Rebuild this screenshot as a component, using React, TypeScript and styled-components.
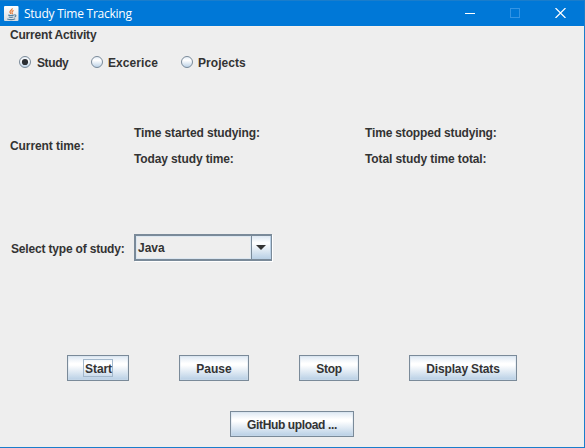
import React, { useState } from "react";
import styled, { createGlobalStyle } from "styled-components";

const GlobalStyle = createGlobalStyle`
  * { box-sizing: border-box; }
  body { margin: 0; background: #eeeeee; overflow: hidden; }
`;

const Window = styled.div`
  display: flex;
  flex-direction: column;
  width: 585px;
  height: 448px;
  background: #eeeeee;
  border-right: 1px solid #1a7dcb;
  border-bottom: 1px solid #1a7dcb;
  font: bold 12px/16px "Liberation Sans", Arial, sans-serif;
  color: #333333;
`;

const TitleBar = styled.header`
  display: flex;
  align-items: center;
  flex: none;
  height: 26px;
  padding-left: 4px;
  background: #0078d7;
  border-top: 1px solid #1a7dcb;
  color: #ffffff;
`;

const Title = styled.h1<{ $spacing: number }>`
  flex: 1;
  margin: 0 0 0 5px;
  font: 400 12px/16px "Open Sans", "Noto Sans", sans-serif;
  letter-spacing: ${(p) => p.$spacing}px;
  white-space: nowrap;
`;

const Controls = styled.div`
  display: flex;
  gap: 35px;
  margin: -1px 18px 0 0;
`;

const Content = styled.main`
  display: flex;
  flex-direction: column;
  flex: 1;
  border-top: 1px solid #f6f1ec;
`;

const Label = styled.span<{ $spacing?: number }>`
  display: block;
  height: 16px;
  white-space: nowrap;
  letter-spacing: ${(p) => p.$spacing ?? 0}px;
`;

const Heading = styled.div`
  padding-left: 10px;
`;

const RadioRow = styled.div`
  display: flex;
  height: 16px;
  margin-top: 12px;
  padding-left: 19px;
`;

const RadioOption = styled.div<{ $width: number; $gap: number }>`
  display: flex;
  align-items: flex-start;
  gap: ${(p) => p.$gap}px;
  width: ${(p) => p.$width}px;
`;

const TimesPanel = styled.section`
  display: grid;
  grid-template-columns: 124px 231px 1fr;
  align-items: center;
  height: 42px;
  margin-top: 54px;
  padding-left: 10px;
`;

const TimeColumn = styled.div`
  display: flex;
  flex-direction: column;
  gap: 10px;
`;

const SelectRow = styled.section`
  display: flex;
  align-items: flex-start;
  height: 28px;
  margin-top: 67px;
  padding-left: 11px;
`;

const SelectLabel = styled.div`
  width: 123px;
  padding-top: 7px;
`;

const ComboBox = styled.div`
  display: flex;
  width: 138px;
  height: 27px;
  border: 2px solid #7a8a99;
  border-right-width: 1px;
  box-shadow: 1px 1px 0 #ffffff;
`;

const ComboValue = styled.div`
  flex: 1;
  padding: 3px 0 0 1px;
  border: 1px solid #dce7f1;
`;

const ComboArrow = styled.div`
  display: flex;
  align-items: center;
  justify-content: center;
  width: 20px;
  border-left: 1px solid #7a8a99;
  border-right: 1px solid #b8cfe5;
  background: linear-gradient(#dde8f3 0%, #ffffff 30%, #b8cfe5 100%);
`;

const ButtonRow = styled.section`
  display: flex;
  height: 26px;
  margin-top: 93px;
  padding-left: 67px;
`;

const Button = styled.button<{ $width: number; $gap?: number }>`
  display: flex;
  align-items: center;
  justify-content: center;
  flex: none;
  width: ${(p) => p.$width}px;
  height: 26px;
  margin: 0 ${(p) => p.$gap ?? 0}px 0 0;
  padding: 1px 0 0;
  border: 1px solid #7a8a99;
  border-radius: 0;
  outline: none;
  background: linear-gradient(#dde8f3 0%, #ffffff 30%, #ffffff 38%, #b8cfe5 100%);
  box-shadow: inset 0 0 0 1px #d3dfea66;
  font: inherit;
  color: inherit;
`;

const FocusRing = styled.span`
  display: flex;
  justify-content: center;
  width: 30px;
  height: 18px;
  margin-top: -2px;
  padding: 1px 0 0 1px;
  border: 1px solid #a3b8cc;
`;

const UploadRow = styled.section`
  display: flex;
  height: 26px;
  margin-top: 30px;
  padding-left: 230px;
`;

const JavaIcon = () => (
  <svg width="15" height="16" viewBox="0 0 15 16">
    <defs>
      <linearGradient id="tile" x1="0" y1="0" x2="0" y2="1">
        <stop offset="0" stopColor="#ffffff" />
        <stop offset="1" stopColor="#d8dce0" />
      </linearGradient>
    </defs>
    <rect x="0" y="0" width="14.5" height="15" rx="1" fill="url(#tile)" />
    <path d="M8.2 2.2c.6 1.5-2.6 2.4-2.3 3.9.1.7 1 1.3 1.1 1.9M9.6 4.6C8 5.200 7.600 6 8.200 6.800c.4.5.2.9-.2 1.300" fill="none" stroke="#e5752e" strokeWidth="1.1" />
    <path d="M4.200 9.100c1.200.5 4.200.4 5.600 0M4.800 11c1.300.5 3.400.4 4.500 0M3.200 12.900c2.300.8 6.100.7 8-.2M10.200 9c2.200-.5 2.300 1.500.2 2.200" fill="none" stroke="#527f9e" strokeWidth="1.1" />
  </svg>
);

const MinimizeIcon = () => (
  <svg width="10" height="10" viewBox="0 0 10 10">
    <path d="M0 5.500h10" stroke="#ffffff" />
  </svg>
);

const MaximizeIcon = () => (
  <svg width="10" height="10" viewBox="0 0 10 10">
    <rect x=".5" y=".5" width="9" height="9" fill="none" stroke="#3394e4" />
  </svg>
);

const CloseIcon = () => (
  <svg width="11" height="10" viewBox="0 0 11 10">
    <path d="M.5 0l10 10M10.500 0L.5 10" stroke="#ffffff" strokeWidth="1.2" />
  </svg>
);

const RadioIcon = ({ checked }: { checked: boolean }) => (
  <svg width="12" height="13" viewBox="0 0 12 13">
    <defs>
      <linearGradient id="radio" x1="0" y1="0" x2="0" y2="1">
        <stop offset="0" stopColor="#e3ecf5" />
        <stop offset=".35" stopColor="#ffffff" />
        <stop offset="1" stopColor="#b8cfe5" />
      </linearGradient>
    </defs>
    <circle cx="6" cy="7" r="5.500" fill="url(#radio)" stroke="#7a8a99" />
    {checked && <circle cx="6" cy="7" r="3.100" fill="#2b2e33" />}
  </svg>
);

const activities = [
  { name: "Study", width: 72, gap: 6, spacing: -0.4 },
  { name: "Excerice", width: 90, gap: 5, spacing: 0.08 },
  { name: "Projects", width: 80, gap: 5, spacing: 0.06 },
];

export default function App() {
  const [activity, setActivity] = useState("Study");
  return (
    <>
      <GlobalStyle />
      <Window>
        <TitleBar>
          <JavaIcon />
          <Title $spacing={-0.25}>Study Time Tracking</Title>
          <Controls>
            <MinimizeIcon />
            <MaximizeIcon />
            <CloseIcon />
          </Controls>
        </TitleBar>
        <Content>
          <Heading>
            <Label $spacing={-0.2}>Current Activity</Label>
          </Heading>
          <RadioRow>
            {activities.map((a) => (
              <RadioOption key={a.name} $width={a.width} $gap={a.gap} onClick={() => setActivity(a.name)}>
                <RadioIcon checked={activity === a.name} />
                <Label $spacing={a.spacing}>{a.name}</Label>
              </RadioOption>
            ))}
          </RadioRow>
          <TimesPanel>
            <Label $spacing={-0.08}>Current time:</Label>
            <TimeColumn>
              <Label $spacing={-0.12}>Time started studying:</Label>
              <Label $spacing={-0.12}>Today study time:</Label>
            </TimeColumn>
            <TimeColumn>
              <Label $spacing={-0.16}>Time stopped studying:</Label>
              <Label $spacing={-0.1}>Total study time total:</Label>
            </TimeColumn>
          </TimesPanel>
          <SelectRow>
            <SelectLabel>
              <Label $spacing={-0.18}>Select type of study:</Label>
            </SelectLabel>
            <ComboBox>
              <ComboValue>Java</ComboValue>
              <ComboArrow>
                <svg width="10" height="5" viewBox="0 0 10 5">
                  <path d="M0 0h10L5 5z" fill="#333333" />
                </svg>
              </ComboArrow>
            </ComboBox>
          </SelectRow>
          <ButtonRow>
            <Button $width={62} $gap={50}>
              <FocusRing>
                <Label $spacing={-0.1}>Start</Label>
              </FocusRing>
            </Button>
            <Button $width={70} $gap={50}>
              <Label>Pause</Label>
            </Button>
            <Button $width={60} $gap={50}>
              <Label $spacing={-0.3}>Stop</Label>
            </Button>
            <Button $width={108}>
              <Label $spacing={-0.15}>Display Stats</Label>
            </Button>
          </ButtonRow>
          <UploadRow>
            <Button $width={124}>
              <Label $spacing={-0.36}>GitHub upload ...</Label>
            </Button>
          </UploadRow>
        </Content>
      </Window>
    </>
  );
}
